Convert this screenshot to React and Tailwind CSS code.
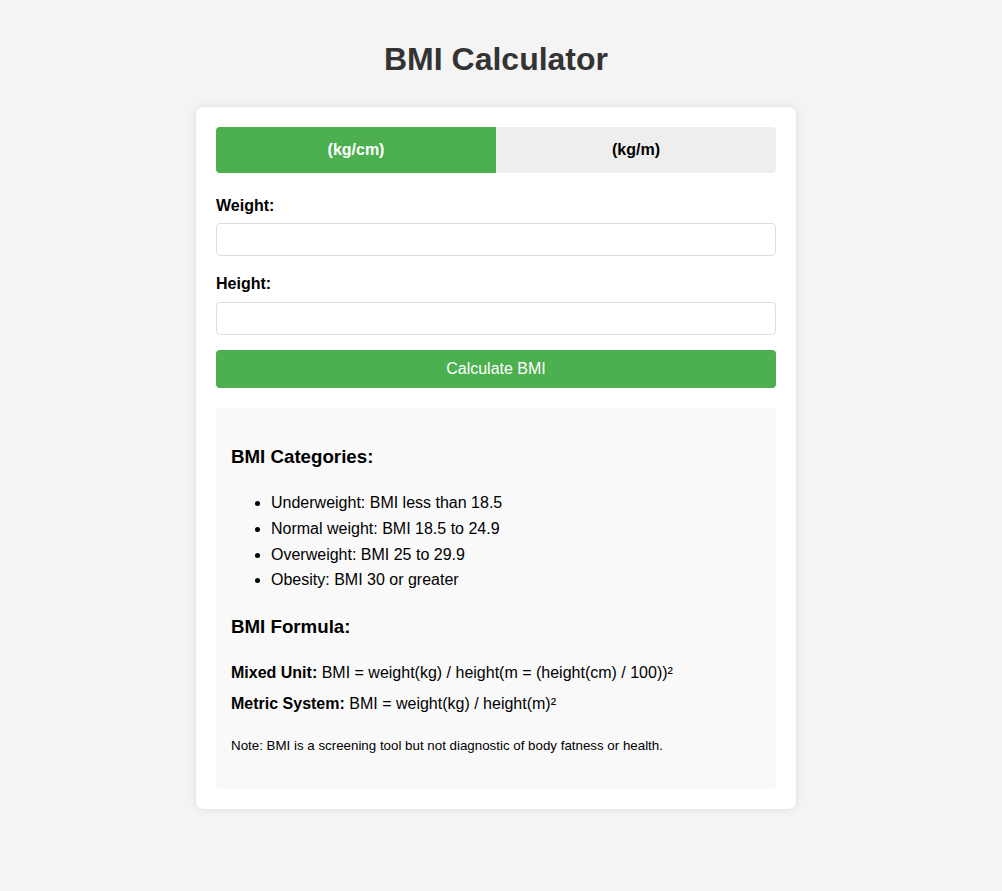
export default function App() {
  return (
    <div className="min-h-screen bg-[#f4f4f4] text-black leading-[1.6]" style={{ fontFamily: '"Liberation Sans", Arial, sans-serif' }}>
      <div className="flex flex-col items-center pt-[34px] pr-[10px] pb-[20px]">
        <h1 className="text-[32px] font-bold text-[#333] h-[51px] leading-[51px] mb-[22px]">BMI Calculator</h1>
        <div className="w-[600px] bg-white rounded-[8px] shadow-[0_0_10px_rgba(0,0,0,0.1)] p-[20px]">
          <div className="flex rounded-[4px] overflow-hidden mb-[20px]">
            <button className="flex-1 h-[45.6px] bg-[#4caf50] text-white font-bold text-[16px]">(kg/cm)</button>
            <button className="flex-1 h-[45.6px] bg-[#eeeeee] text-black font-bold text-[16px]">(kg/m)</button>
          </div>
          <div className="mb-[15px]">
            <label className="block font-bold text-[16px] leading-[25.6px] mb-[5px]">Weight:</label>
            <input type="number" className="block w-full h-[33px] border border-[#dddddd] rounded-[4px] px-[8px] text-[13.33px] outline-none" />
          </div>
          <div className="mb-[15px]">
            <label className="block font-bold text-[16px] leading-[25.6px] mb-[5px]">Height:</label>
            <input type="number" className="block w-full h-[33px] border border-[#dddddd] rounded-[4px] px-[8px] text-[13.33px] outline-none" />
          </div>
          <button className="block w-full h-[38px] bg-[#4caf50] text-white text-[16px] rounded-[4px]">Calculate BMI</button>
          <div className="mt-[20px] bg-[#f9f9f9] rounded-[4px] px-[15px] pt-[34px] pb-[15px]">
            <h3 className="text-[18.72px] font-bold leading-[30px]">BMI Categories:</h3>
            <ul className="list-disc pl-[40px] mt-[18.7px] text-[16px] leading-[25.6px]">
              <li>Underweight: BMI less than 18.5</li>
              <li>Normal weight: BMI 18.5 to 24.9</li>
              <li>Overweight: BMI 25 to 29.9</li>
              <li>Obesity: BMI 30 or greater</li>
            </ul>
            <h3 className="text-[18.72px] font-bold leading-[30px] mt-[18.7px]">BMI Formula:</h3>
            <p className="mt-[18.7px] text-[16px] leading-[25.6px]"><strong>Mixed Unit:</strong> BMI = weight(kg) / height(m = (height(cm) / 100))²</p>
            <p className="mt-[5px] text-[16px] leading-[25.6px]"><strong>Metric System:</strong> BMI = weight(kg) / height(m)²</p>
            <p className="mt-[18.5px] mb-[18px] text-[13.33px] leading-[21.3px]">Note: BMI is a screening tool but not diagnostic of body fatness or health.</p>
          </div>
        </div>
      </div>
    </div>
  );
}
